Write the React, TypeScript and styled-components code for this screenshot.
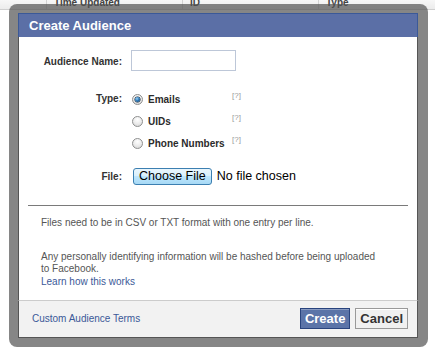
import React from 'react'
import styled, { createGlobalStyle } from 'styled-components'

const GlobalStyle = createGlobalStyle`
  html, body {
    margin: 0;
    padding: 0;
    background: #fff;
  }
  body {
    font-family: "Liberation Sans", Arial, sans-serif;
    font-size: 10px;
    color: #333;
  }
`

const Page = styled.div`
  position: relative;
  width: 435px;
  height: 356px;
  overflow: hidden;
  background: #fff;
`

const TableHead = styled.div`
  display: flex;
  align-items: flex-end;
  height: 9px;
  border-bottom: 1px solid #cfcfcf;
  background: linear-gradient(#f7f7f7, #ececec);
`

const HeadCell = styled.div<{ w?: number }>`
  flex: ${({ w }) => (w ? `0 0 ${w}px` : '1 1 auto')};
  box-sizing: border-box;
  height: 100%;
  display: flex;
  align-items: flex-end;
  padding: 0 0 1px 7px;
  border-right: 1px solid #d4d4d4;
  font-weight: bold;
  font-size: 10px;
  line-height: 10px;
  color: #444;
  white-space: nowrap;

  &:last-child {
    border-right: none;
  }
`

const Overlay = styled.div`
  position: absolute;
  left: 9px;
  top: 4px;
  padding: 9px 10px 9px 9px;
  border-radius: 8px;
  background: rgba(82, 82, 82, 0.7);
`

const Dialog = styled.div`
  width: 400px;
  box-sizing: border-box;
  background: #fff;
`

const DialogHeader = styled.h2`
  margin: 0;
  height: 24px;
  box-sizing: border-box;
  padding: 0 0 0 10px;
  background: #5b6fa6;
  border: 1px solid #3b5998;
  border-bottom: none;
  color: #fff;
  font-size: 13px;
  font-weight: bold;
  line-height: 23px;
`

const DialogBody = styled.div`
  padding: 13px 9px 12px;
  border-left: 1px solid #555;
  border-right: 1px solid #555;
`

const FieldRow = styled.div<{ top?: number; align?: string }>`
  display: flex;
  align-items: ${({ align }) => align || 'baseline'};
  gap: 9px;
  margin-top: ${({ top }) => top || 0}px;
`

const FieldLabel = styled.label<{ lh?: number }>`
  flex: 0 0 94px;
  text-align: right;
  font-weight: bold;
  font-size: 10px;
  color: #333;
  line-height: ${({ lh }) => lh || 12}px;
`

const TextInput = styled.input`
  width: 105px;
  height: 21px;
  box-sizing: border-box;
  margin: 0;
  padding: 3px;
  border: 1px solid #bdc7d8;
  font-family: "Liberation Sans", Arial, sans-serif;
  font-size: 11px;
`

const Options = styled.div`
  display: flex;
  flex-direction: column;
`

const Option = styled.label`
  display: flex;
  align-items: center;
  height: 22px;
  cursor: pointer;
`

const Radio = styled.span<{ checked?: boolean }>`
  position: relative;
  flex: 0 0 auto;
  width: 11px;
  height: 11px;
  box-sizing: border-box;
  border-radius: 50%;
  border: 1px solid #8e8f8f;
  background: radial-gradient(circle at 50% 30%, #ffffff 0%, #eaeaea 55%, #cfcfcf 100%);
  margin: 0 5px 0 1px;

  &::after {
    content: '';
    display: ${({ checked }) => (checked ? 'block' : 'none')};
    position: absolute;
    left: 2px;
    top: 2px;
    width: 5px;
    height: 5px;
    border-radius: 50%;
    background: radial-gradient(circle at 40% 35%, #9fd3f5 0%, #2a78b8 45%, #0e3a62 100%);
    box-shadow: 0 0 0 0.5px #123;
  }
`

const OptionText = styled.span`
  flex: 0 0 84px;
  font-weight: bold;
  font-size: 10px;
  color: #2b2b2b;
`

const Help = styled.span`
  align-self: flex-start;
  margin-top: 3px;
  font-size: 8px;
  color: #999;
`

const FileButton = styled.button`
  margin: 0 0 0 2px;
  height: 17px;
  padding: 0 5px;
  border: 1px solid #3c7fb1;
  border-radius: 3px;
  background: linear-gradient(#eaf6fd 0%, #d9f0fc 45%, #bee6fd 50%, #a7d9f5 100%);
  font-family: "Liberation Sans", Arial, sans-serif;
  font-size: 12.5px;
  line-height: 15px;
  color: #000;
`

const FileName = styled.span`
  margin-left: 5px;
  font-size: 12.5px;
  color: #000;
`

const Divider = styled.hr`
  margin: 20px 0 0;
  border: none;
  border-top: 1px solid #7a7a7a;
  height: 0;
`

const Notes = styled.div`
  width: 338px;
  padding: 0 0 0 13px;
`

const Note = styled.p<{ top?: number }>`
  margin: ${({ top }) => top || 0}px 0 0;
  font-size: 10px;
  line-height: 12.5px;
  color: #555;
`

const Link = styled.a`
  color: #3b5998;
  text-decoration: none;
  cursor: pointer;
`

const Footer = styled.div`
  display: flex;
  align-items: center;
  justify-content: space-between;
  padding: 7px 9px 8px 13px;
  background: #f2f2f2;
  border: 1px solid #555;
  border-top: 1px solid #ccc;
`

const FooterLink = styled(Link)`
  font-size: 10px;
`

const Buttons = styled.div`
  display: flex;
  gap: 5px;
`

const Button = styled.button<{ primary?: boolean }>`
  height: 21px;
  box-sizing: border-box;
  padding: 0 4px;
  margin: 0;
  font-family: "Liberation Sans", Arial, sans-serif;
  font-size: 13px;
  font-weight: bold;
  line-height: 19px;
  cursor: pointer;
  color: ${({ primary }) => (primary ? '#fff' : '#333')};
  background: ${({ primary }) => (primary ? '#5b74a8' : '#f0f0f0')};
  border: 1px solid ${({ primary }) => (primary ? '#29447e' : '#999')};
  box-shadow: inset 0 1px 0 ${({ primary }) => (primary ? '#8a9cc2' : '#fff')};
`

const AUDIENCE_TYPES = [
  { label: 'Emails', checked: true },
  { label: 'UIDs', checked: false },
  { label: 'Phone Numbers', checked: false },
]

export default function App() {
  return (
    <Page>
      <GlobalStyle />
      <TableHead>
        <HeadCell w={47} />
        <HeadCell w={136}>Time Updated</HeadCell>
        <HeadCell w={136}>ID</HeadCell>
        <HeadCell>Type</HeadCell>
      </TableHead>

      <Overlay>
        <Dialog>
          <DialogHeader>Create Audience</DialogHeader>
          <DialogBody>
            <FieldRow>
              <FieldLabel>Audience Name:</FieldLabel>
              <TextInput type="text" />
            </FieldRow>

            <FieldRow top={17} align="flex-start">
              <FieldLabel lh={22}>Type:</FieldLabel>
              <Options>
                {AUDIENCE_TYPES.map((t) => (
                  <Option key={t.label}>
                    <Radio checked={t.checked} />
                    <OptionText>{t.label}</OptionText>
                    <Help>[?]</Help>
                  </Option>
                ))}
              </Options>
            </FieldRow>

            <FieldRow top={14}>
              <FieldLabel>File:</FieldLabel>
              <div>
                <FileButton>Choose File</FileButton>
                <FileName>No file chosen</FileName>
              </div>
            </FieldRow>

            <Divider />

            <Notes>
              <Note top={11}>Files need to be in CSV or TXT format with one entry per line.</Note>
              <Note top={21}>
                Any personally identifying information will be hashed before being uploaded to Facebook.
                <br />
                <Link>Learn how this works</Link>
              </Note>
            </Notes>
          </DialogBody>
          <Footer>
            <FooterLink>Custom Audience Terms</FooterLink>
            <Buttons>
              <Button primary>Create</Button>
              <Button>Cancel</Button>
            </Buttons>
          </Footer>
        </Dialog>
      </Overlay>
    </Page>
  )
}
